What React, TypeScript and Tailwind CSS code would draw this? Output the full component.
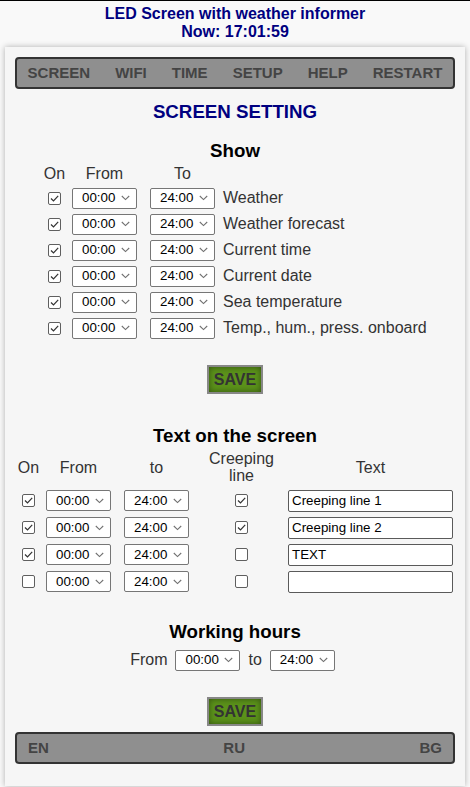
import React from 'react';

const Check: React.FC<{ checked?: boolean }> = ({ checked }) => (
  <span className="w-[13px] h-[13px] shrink-0 border border-[#5f5f5f] rounded-[2px] bg-white flex items-center justify-center">
    {checked && (
      <svg width="11" height="11" viewBox="0 0 11 11">
        <path d="M2 5.5 L4.5 8 L9.2 2.8" fill="none" stroke="#333" strokeWidth="1.2" />
      </svg>
    )}
  </span>
);

const Select: React.FC<{ value: string }> = ({ value }) => (
  <div className="w-[65px] h-[21px] shrink-0 border border-[#767676] rounded-[2px] bg-white flex items-center justify-between pl-[9px] pr-[6px] text-[13.33px] text-black leading-none">
    <span>{value}</span>
    <svg width="9" height="6" viewBox="0 0 9 6">
      <path d="M0.8 1 L4.5 4.6 L8.2 1" fill="none" stroke="#707070" strokeWidth="1.1" />
    </svg>
  </div>
);

const SaveButton: React.FC = () => (
  <div className="mx-auto w-[56px] h-[29px] border-2 border-[#878787] bg-[#5b921a] shadow-[inset_0_0_6px_rgba(0,0,0,0.45)] flex items-center justify-center text-[16px] font-bold text-[#333]">
    SAVE
  </div>
);

const showRows = [
  'Weather',
  'Weather forecast',
  'Current time',
  'Current date',
  'Sea temperature',
  'Temp., hum., press. onboard',
];

const textRows = [
  { on: true, creep: true, text: 'Creeping line 1' },
  { on: true, creep: true, text: 'Creeping line 2' },
  { on: true, creep: false, text: 'TEXT' },
  { on: false, creep: false, text: '' },
];

const menu = ['SCREEN', 'WIFI', 'TIME', 'SETUP', 'HELP', 'RESTART'];

export default function App() {
  return (
    <div className="min-h-screen bg-[#f9f9f9] border-t border-black font-['Liberation_Sans',Arial,sans-serif] pt-[4px]">
      <div className="text-center text-[16px] leading-[18px] font-bold text-[#000080]">
        <div>LED Screen with weather informer</div>
        <div>Now: 17:01:59</div>
      </div>

      <div className="mt-[6px] mx-[5px] bg-[#f6f6f6] shadow-[0_0_6px_rgba(0,0,0,0.3)] pt-[10px] px-[10px] pb-[22px]">
        {/* menu */}
        <div className="h-[32px] flex items-center justify-center bg-[#8f8f8f] border-2 border-[#333] rounded-[4px] text-[15px] font-bold text-[#444] overflow-hidden">
          {menu.map((m) => (
            <span key={m} className="px-[12.5px] whitespace-nowrap">{m}</span>
          ))}
        </div>

        <div className="mt-[12px] h-[22px] leading-[22px] text-center text-[18.72px] font-bold text-[#000080]">
          SCREEN SETTING
        </div>

        <div className="mt-[17px] h-[22px] leading-[22px] text-center text-[18.72px] font-bold text-black">
          Show
        </div>

        <div className="pl-[33px] text-[16px] text-[#333]">
          <div className="h-[23px] flex items-center">
            <div className="w-[13px] flex justify-center whitespace-nowrap">On</div>
            <div className="w-[65px] ml-[11px] flex justify-center">From</div>
            <div className="w-[65px] ml-[13px] flex justify-center">To</div>
          </div>
          {showRows.map((r) => (
            <div key={r} className="h-[26px] flex items-center">
              <Check checked />
              <div className="ml-[11px]"><Select value="00:00" /></div>
              <div className="ml-[13px]"><Select value="24:00" /></div>
              <span className="ml-[8px] whitespace-nowrap">{r}</span>
            </div>
          ))}
        </div>

        <div className="mt-[24px]">
          <SaveButton />
        </div>

        <div className="mt-[31px] h-[22px] leading-[22px] text-center text-[18.72px] font-bold text-black">
          Text on the screen
        </div>

        <div className="pl-[7px] text-[16px] text-[#333]">
          <div className="h-[40px] flex items-center leading-[17px]">
            <div className="w-[13px] flex justify-center whitespace-nowrap">On</div>
            <div className="w-[65px] ml-[11px] flex justify-center">From</div>
            <div className="w-[65px] ml-[13px] flex justify-center">to</div>
            <div className="w-[13px] ml-[46px] flex justify-center whitespace-nowrap text-center">
              Creeping
              <br />
              line
            </div>
            <div className="w-[165px] ml-[40px] flex justify-center">Text</div>
          </div>
          {textRows.map((r, i) => (
            <div key={i} className="h-[27px] flex items-center">
              <Check checked={r.on} />
              <div className="ml-[11px]"><Select value="00:00" /></div>
              <div className="ml-[13px]"><Select value="24:00" /></div>
              <div className="ml-[46px]"><Check checked={r.creep} /></div>
              <div className="ml-[40px] w-[165px] h-[22px] border border-[#5a5a5a] rounded-[2px] bg-white pl-[3px] flex items-center text-[13.33px] text-black">
                {r.text}
              </div>
            </div>
          ))}
        </div>

        <div className="mt-[26px] h-[22px] leading-[22px] text-center text-[18.72px] font-bold text-black">
          Working hours
        </div>
        <div className="mt-[5px] h-[24px] flex items-center justify-center pr-[5px] text-[16px] text-[#333]">
          <span>From</span>
          <div className="ml-[8px]"><Select value="00:00" /></div>
          <span className="ml-[8px]">to</span>
          <div className="ml-[8px]"><Select value="24:00" /></div>
        </div>

        <div className="mt-[25px]">
          <SaveButton />
        </div>

        <div className="mt-[6px] h-[32px] flex items-center justify-between px-[11px] bg-[#8f8f8f] border-2 border-[#333] rounded-[4px] text-[15px] font-bold text-[#444]">
          <span>EN</span>
          <span>RU</span>
          <span>BG</span>
        </div>
      </div>
    </div>
  );
}
